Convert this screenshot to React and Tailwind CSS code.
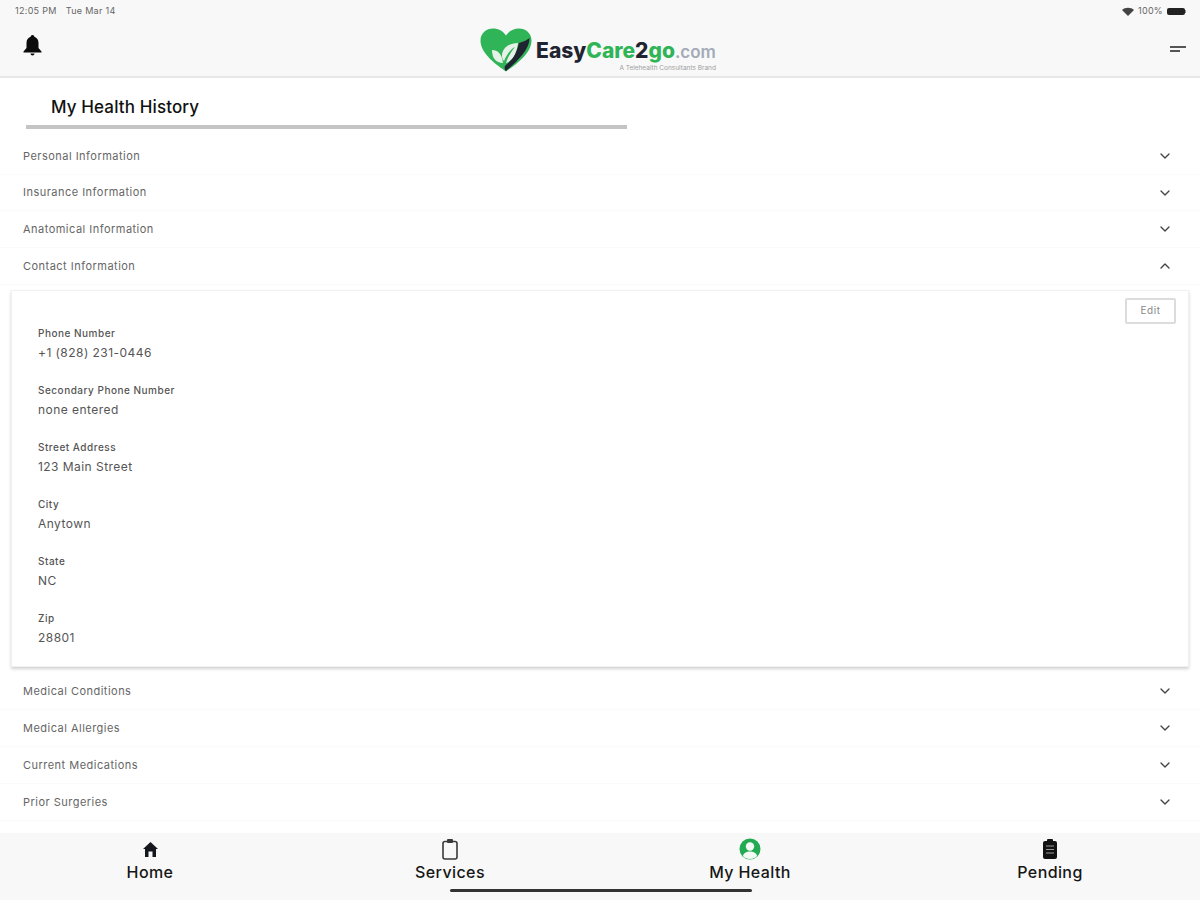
import React from "react";
import { ChevronDown, ChevronUp } from "lucide-react";

const FONT = "font-['Inter','Liberation_Sans',sans-serif]";

const topRows = ["Personal Information", "Insurance Information", "Anatomical Information"];
const bottomRows = ["Medical Conditions", "Medical Allergies", "Current Medications", "Prior Surgeries", "Ongoing Allergies"];
const fields = [
  { label: "Phone Number", value: "+1 (828) 231-0446" },
  { label: "Secondary Phone Number", value: "none entered" },
  { label: "Street Address", value: "123 Main Street" },
  { label: "City", value: "Anytown" },
  { label: "State", value: "NC" },
  { label: "Zip", value: "28801" },
];

const Logo = () => (
  <div className="flex items-center">
    <svg width="52" height="44" viewBox="0 0 52 44">
      <path d="M26 43.5C17 37 0.5 26 0.5 12.5C0.5 5 6.5 0.5 13 0.5C18.5 0.5 23 3 26 7.5C29 3 33.5 0.5 39 0.5C45.5 0.5 51.5 5 51.5 12.5C51.5 26 35 37 26 43.5Z" fill="#2fb457" />
      <path d="M39 15C43 14 47 12 49.5 10C50 21 37 34 26 43C24 41 24 38 27 36C33 31 37 24 39 15Z" fill="#1f2430" />
      <path d="M38 15C29 15 22 20 22 28C22 30 23 32 24 33C27 26 31 21 35 19C32 23 28 28 26 35C33 33 37 24 38 15Z" fill="#e6f2e8" />
      <path d="M12 22C18 22 22 26 23 35C16 35 12 30 12 22Z" fill="#e6f2e8" />
    </svg>
    <div className="ml-[4px] flex flex-col items-end pt-[12px]">
      <div className="flex items-baseline leading-[22px]">
        <span className="text-[21px] font-extrabold text-[#1f2430]">Easy</span>
        <span className="text-[21px] font-extrabold text-[#2fb457]">Care</span>
        <span className="text-[21px] font-extrabold text-[#1f2430]">2</span>
        <span className="text-[21px] font-extrabold text-[#2fb457]">go</span>
        <span className="text-[17px] font-semibold text-[#a4abb8]">.com</span>
      </div>
      <span className="mt-[2px] text-[6.5px] leading-[7px] text-[#a0a0a0]">A Telehealth Consultants Brand</span>
    </div>
  </div>
);

const StatusBar = () => (
  <div className="flex h-[22px] items-center justify-between pl-[15px] pr-[14px] text-[9px] tracking-[0.3px] text-[#666]">
    <div className="flex gap-[9px]">
      <span>12:05 PM</span>
      <span>Tue Mar 14</span>
    </div>
    <div className="flex items-center gap-[4px]">
      <svg width="12" height="9" viewBox="0 0 12 9">
        <path d="M0 3C3 0 9 0 12 3L6 9Z" fill="#444" />
      </svg>
      <span>100%</span>
      <div className="flex items-center">
        <div className="h-[7px] w-[18px] rounded-[2px] bg-[#222]" />
        <div className="h-[3px] w-[1px] bg-[#888]" />
      </div>
    </div>
  </div>
);

const Header = () => (
  <header className="h-[78px] shrink-0 border-b-2 border-[#e8e8e8] bg-[#f8f8f8]">
    <StatusBar />
    <div className="flex h-[54px] items-start justify-between pl-[23px] pr-[14px]">
      <svg className="mt-[12px]" width="19" height="22" viewBox="0 0 19 22">
        <path d="M9.5 1C10.6 1 11.3 1.8 11.3 2.8C14 3.6 15.5 6 15.5 9V14L18.5 17.5V18.5H0.5V17.5L3.5 14V9C3.5 6 5 3.6 7.7 2.8C7.7 1.8 8.4 1 9.5 1Z" fill="#0b0b0b" />
        <path d="M7.5 19.5H11.5C11.5 20.7 10.6 21.5 9.5 21.5C8.4 21.5 7.5 20.7 7.5 19.5Z" fill="#0b0b0b" />
      </svg>
      <div className="mr-[16px] mt-[6px]">
        <Logo />
      </div>
      <div className="mt-[24px] flex w-[16px] flex-col gap-[2px]">
        <div className="h-[2px] w-full bg-[#555]" />
        <div className="h-[2px] w-[10px] bg-[#555]" />
      </div>
    </div>
  </header>
);

const Row = ({ label, open, tall }) => (
  <div className={`flex shrink-0 items-center justify-between border-b border-[#fafafa] pl-[23px] pr-[27px] ${tall ? "h-[37px]" : "h-[36.7px]"}`}>
    <span className="text-[11px] tracking-[0.48px] text-[#666]">{label}</span>
    {open ? (
      <ChevronUp size={16} strokeWidth={2} className="text-[#444]" />
    ) : (
      <ChevronDown size={16} strokeWidth={2} className="text-[#444]" />
    )}
  </div>
);

const ContactPanel = () => (
  <div className="mx-[11px] mt-[5px] flex h-[377px] shrink-0 items-start justify-between border border-[#f0f0f0] bg-white pl-[26px] pr-[12px] pt-[7px] shadow-[0_2px_3px_rgba(0,0,0,0.18)]">
    <div className="flex flex-col gap-[23px] pt-[29px]">
      {fields.map((f) => (
        <div key={f.label} className="flex h-[34px] flex-col justify-between">
          <span className="text-[10px] font-medium leading-[12px] tracking-[0.5px] text-[#555]">{f.label}</span>
          <span className="text-[12px] leading-[16px] tracking-[0.45px] text-[#555]">{f.value}</span>
        </div>
      ))}
    </div>
    <button className="flex h-[26px] w-[51px] items-center justify-center rounded-[2px] border-2 border-[#dcdcdc] bg-white text-[10px] tracking-[0.5px] text-[#888]">
      Edit
    </button>
  </div>
);

const HomeIcon = () => (
  <svg width="17" height="17" viewBox="0 0 17 17">
    <path d="M8.5 1L16 8H14V16H10.5V10.5H6.5V16H3V8H1Z" fill="#14171c" />
  </svg>
);

const ClipboardOutline = () => (
  <svg width="18" height="22" viewBox="0 0 18 22">
    <rect x="2" y="3.5" width="14" height="17.5" rx="2" fill="none" stroke="#3a3a3a" strokeWidth="1.6" />
    <rect x="6" y="1" width="6" height="4" rx="1" fill="#3a3a3a" />
  </svg>
);

const UserCircle = () => (
  <svg width="22" height="22" viewBox="0 0 22 22">
    <circle cx="11" cy="11" r="10.5" fill="#22ab53" />
    <circle cx="11" cy="8.5" r="4.2" fill="#f3faf5" />
    <path d="M3.8 18C5 14.5 8 13.5 11 13.5C14 13.5 17 14.5 18.2 18C16.5 20 14 21 11 21C8 21 5.5 20 3.8 18Z" fill="#f3faf5" />
  </svg>
);

const ClipboardFilled = () => (
  <svg width="16" height="22" viewBox="0 0 16 22">
    <rect x="1" y="3" width="14" height="18" rx="2" fill="#121212" />
    <rect x="5" y="1" width="6" height="4" rx="1" fill="#121212" />
    <path d="M4 8H12M4 11.5H12M4 15H12" stroke="#9a9a9a" strokeWidth="1.2" />
  </svg>
);

const tabs = [
  { label: "Home", icon: <HomeIcon /> },
  { label: "Services", icon: <ClipboardOutline /> },
  { label: "My Health", icon: <UserCircle /> },
  { label: "Pending", icon: <ClipboardFilled /> },
];

const BottomNav = () => (
  <nav className="relative grid h-[67px] shrink-0 grid-cols-4 bg-[#f8f8f8]">
    {tabs.map((t) => (
      <div key={t.label} className="flex flex-col items-center pt-[4px]">
        <div className="flex h-[24px] items-center">{t.icon}</div>
        <span className="mt-[1px] text-[16px] font-medium leading-[20px] tracking-[0.4px] text-[#161616]">{t.label}</span>
      </div>
    ))}
    <div className="absolute bottom-[8px] left-[450px] h-[3px] w-[302px] rounded-full bg-[#333]" />
  </nav>
);

export default function App() {
  return (
    <div className={`flex h-[900px] w-[1200px] flex-col overflow-hidden bg-white ${FONT}`}>
      <Header />
      <main className="flex min-h-0 flex-1 flex-col overflow-hidden">
        <h1 className="ml-[51px] mt-[17px] text-[17px] font-medium leading-[24px] tracking-[0.12px] text-[#111]">My Health History</h1>
        <div className="ml-[26px] mt-[6px] h-[4px] w-[601px] shrink-0 bg-[#c4c4c4]" />
        <div className="mt-[9px] flex flex-col">
          {topRows.map((r) => (
            <Row key={r} label={r} />
          ))}
          <Row label="Contact Information" open />
        </div>
        <ContactPanel />
        <div className="mt-[6px] flex flex-col">
          {bottomRows.map((r) => (
            <Row key={r} label={r} tall />
          ))}
        </div>
      </main>
      <BottomNav />
    </div>
  );
}
